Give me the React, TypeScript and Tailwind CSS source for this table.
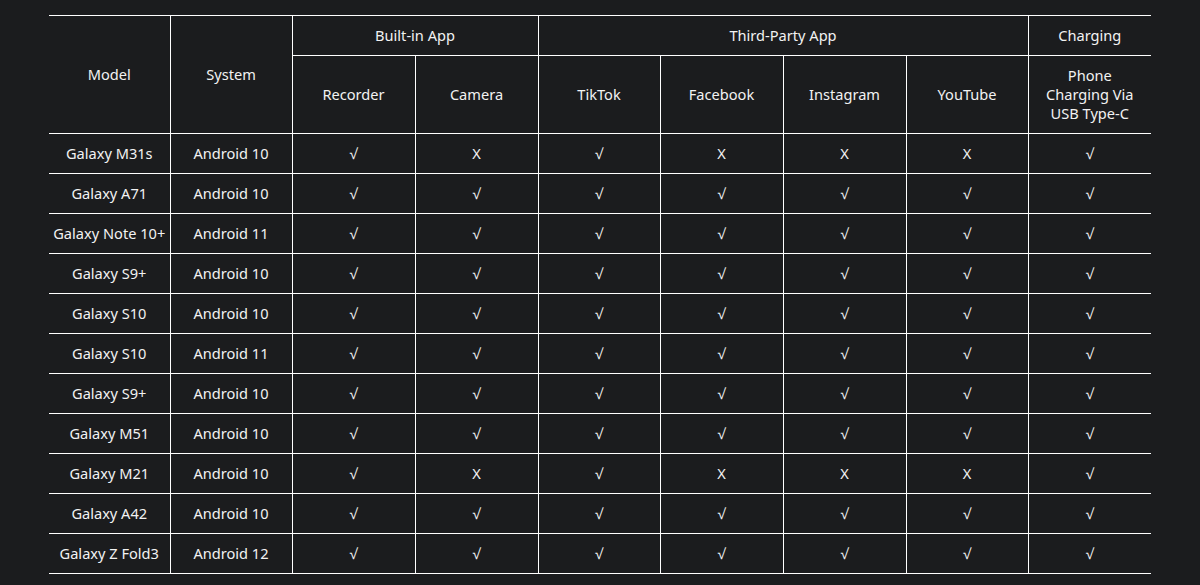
const rows: [string, string, string][] = [
  ["Galaxy M31s", "Android 10", "√X√XXX√"],
  ["Galaxy A71", "Android 10", "√√√√√√√"],
  ["Galaxy Note 10+", "Android 11", "√√√√√√√"],
  ["Galaxy S9+", "Android 10", "√√√√√√√"],
  ["Galaxy S10", "Android 10", "√√√√√√√"],
  ["Galaxy S10", "Android 11", "√√√√√√√"],
  ["Galaxy S9+", "Android 10", "√√√√√√√"],
  ["Galaxy M51", "Android 10", "√√√√√√√"],
  ["Galaxy M21", "Android 10", "√X√XXX√"],
  ["Galaxy A42", "Android 10", "√√√√√√√"],
  ["Galaxy Z Fold3", "Android 12", "√√√√√√√"],
];

const widths = [121, 122, 123, 123, 122, 123, 123, 122, 123];

const cell = "border border-white text-center align-middle p-0";
const edge = "first:border-l-0 last:border-r-0";

export default function App() {
  return (
    <div
      className="min-h-[585px] w-full bg-[#1b1c1e] pt-[15px] pl-[49px] text-[14.6px] text-[#f2f2f2]"
      style={{ fontFamily: '"Noto Sans", "Open Sans", sans-serif' }}
    >
      <table className="w-[1102px] table-fixed border-collapse leading-[19px]">
        <colgroup>
          {widths.map((w, i) => (
            <col key={i} style={{ width: w }} />
          ))}
        </colgroup>
        <thead>
          <tr className="h-[40px]">
            <th rowSpan={2} className={`${cell} border-l-0 font-normal`}>Model</th>
            <th rowSpan={2} className={`${cell} font-normal`}>System</th>
            <th colSpan={2} className={`${cell} font-normal`}>Built-in App</th>
            <th colSpan={4} className={`${cell} font-normal`}>Third-Party App</th>
            <th className={`${cell} border-r-0 font-normal`}>Charging</th>
          </tr>
          <tr className="h-[78px]">
            <th className={`${cell} font-normal`}>Recorder</th>
            <th className={`${cell} font-normal`}>Camera</th>
            <th className={`${cell} font-normal`}>TikTok</th>
            <th className={`${cell} font-normal`}>Facebook</th>
            <th className={`${cell} font-normal`}>Instagram</th>
            <th className={`${cell} font-normal`}>YouTube</th>
            <th className={`${cell} border-r-0 font-normal px-3`}>
              Phone Charging Via USB Type-C
            </th>
          </tr>
        </thead>
        <tbody>
          {rows.map(([model, sys, marks], i) => (
            <tr key={i} className="h-[40px]">
              <td className={`${cell} ${edge}`}>{model}</td>
              <td className={`${cell} ${edge}`}>{sys}</td>
              {Array.from(marks).map((m, j) => (
                <td key={j} className={`${cell} ${edge}`}>
                  {m}
                </td>
              ))}
            </tr>
          ))}
        </tbody>
      </table>
    </div>
  );
}
